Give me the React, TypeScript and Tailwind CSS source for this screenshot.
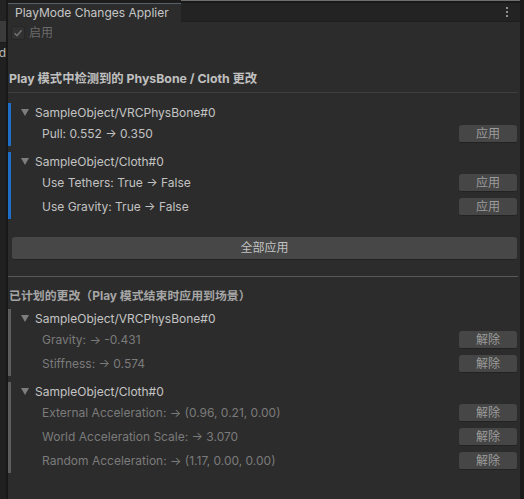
import React from "react";

type Row = { label: string; action: string };
type Group = { name: string; rows: Row[]; accent: "live" | "queued" };

const detected: Group[] = [
  {
    name: "SampleObject/VRCPhysBone#0",
    accent: "live",
    rows: [{ label: "Pull: 0.552 → 0.350", action: "应用" }],
  },
  {
    name: "SampleObject/Cloth#0",
    accent: "live",
    rows: [
      { label: "Use Tethers: True → False", action: "应用" },
      { label: "Use Gravity: True → False", action: "应用" },
    ],
  },
];

const scheduled: Group[] = [
  {
    name: "SampleObject/VRCPhysBone#0",
    accent: "queued",
    rows: [
      { label: "Gravity: → -0.431", action: "解除" },
      { label: "Stiffness: → 0.574", action: "解除" },
    ],
  },
  {
    name: "SampleObject/Cloth#0",
    accent: "queued",
    rows: [
      { label: "External Acceleration: → (0.96, 0.21, 0.00)", action: "解除" },
      { label: "World Acceleration Scale: → 3.070", action: "解除" },
      { label: "Random Acceleration: → (1.17, 0.00, 0.00)", action: "解除" },
    ],
  },
];

function Foldout() {
  return (
    <svg width="8" height="7" viewBox="0 0 8 7" className="shrink-0">
      <polygon points="0,0 8,0 4,7" fill="#7d7d7d" />
    </svg>
  );
}

function SmallButton({ children }: { children: React.ReactNode }) {
  return (
    <button className="flex h-[18px] w-[58px] shrink-0 items-center justify-center rounded-[3px] border-b border-[#222222] bg-[#464646] text-[12px] leading-none text-[#9c9c9c]">
      {children}
    </button>
  );
}

function ChangeGroup({ group, className = "" }: { group: Group; className?: string }) {
  const live = group.accent === "live";
  return (
    <div className={`flex ${className}`}>
      <div className={`w-[3px] shrink-0 ${live ? "bg-[#1e6dc6]" : "bg-[#5d5d5d]"}`} />
      <div className="flex flex-1 flex-col">
        <div className="flex h-[19px] items-center gap-[6px] pl-[10px] text-[12px] text-[#c4c4c4]">
          <Foldout />
          <span className="whitespace-nowrap">{group.name}</span>
        </div>
        {group.rows.map((r) => (
          <div key={r.label} className="flex h-[24px] items-center justify-between pl-[31px] pr-[3px]">
            <span className={`whitespace-nowrap text-[12px] ${live ? "text-[#c2c2c2]" : "text-[#7b7b7b]"}`}>{r.label}</span>
            <SmallButton>{r.action}</SmallButton>
          </div>
        ))}
      </div>
    </div>
  );
}

export default function App() {
  return (
    <div className="flex h-[499px] w-[524px] overflow-hidden bg-[#1b1b1b] font-['Inter','Noto_Sans_CJK_SC',sans-serif]">
      {/* sliver of the neighbouring window */}
      <div className="flex w-[6px] shrink-0 flex-col">
        <div className="h-[21px] bg-[#232323]" />
        <div className="h-[22px] border-b border-[#1a1a1a] bg-[#3b3b3b]" />
        <div className="flex flex-1 justify-end bg-[#202020] pt-[2px]">
          <span className="text-[12px] leading-[16px] text-[#b8b8b8]">d</span>
        </div>
      </div>
      <div className="w-[2px] shrink-0 bg-[#181818]" />

      {/* editor window */}
      <div className="flex w-[512px] shrink-0 flex-col bg-[#2c2c2c]">
        <div className="flex h-[22px] shrink-0 items-end bg-[#1c1c1c]">
          <div className="flex h-[19px] w-[173px] items-center whitespace-nowrap border-t border-[#56616b] bg-[#2c2c2c] pl-[7px] text-[12px] text-[#c6c6c6]">
            PlayMode Changes Applier
          </div>
          <div className="flex h-[22px] flex-1 flex-col">
            <div className="h-px bg-[#6e6e6e]" />
            <div className="h-[2px] bg-[#191919]" />
            <div className="flex flex-1 items-center justify-end border-b border-[#1d1d1d] bg-[#232323] pr-[12px]">
              <div className="flex flex-col gap-[2px]">
                <div className="h-[2px] w-[2px] bg-[#8f8f8f]" />
                <div className="h-[2px] w-[2px] bg-[#8f8f8f]" />
                <div className="h-[2px] w-[2px] bg-[#8f8f8f]" />
              </div>
            </div>
          </div>
        </div>

        <div className="flex flex-col pt-[1px]">
          <div className="mt-[2px] flex h-[16px] items-center gap-[4px] pl-[3px]">
            <div className="flex h-[14px] w-[14px] items-center justify-center rounded-[2px] border border-[#262626] bg-[#313131]">
              <svg width="10" height="10" viewBox="0 0 10 10">
                <path d="M1.5 5.2 L4 7.6 L8.6 2.2" fill="none" stroke="#707070" strokeWidth="1.5" />
              </svg>
            </div>
            <span className="text-[12px] text-[#6a6a6a]">启用</span>
          </div>

          <div className="mt-[29px] flex h-[18px] items-center whitespace-nowrap pl-[1px] text-[12.3px] font-bold text-[#c0c0c0]">
            Play 模式中检测到的 PhysBone / Cloth 更改
          </div>
          <div className="mr-[2px] mt-[4px] h-px bg-[#3e3e3e]" />

          <ChangeGroup group={detected[0]} className="mt-[10px]" />
          <ChangeGroup group={detected[1]} className="mt-[6px]" />

          <button className="ml-[4px] mr-[3px] mt-[18px] flex h-[23px] items-center justify-center rounded-[3px] border-b border-[#222222] bg-[#474747] text-[12px] text-[#c2c2c2]">
            全部应用
          </button>

          <div className="mr-[2px] mt-[16px] h-px bg-[#585858]" />

          <div className="mt-[10px] flex h-[18px] items-center whitespace-nowrap pl-[1px] text-[11.9px] font-bold text-[#a6a6a6]">
            已计划的更改（Play 模式结束时应用到场景）
          </div>

          <ChangeGroup group={scheduled[0]} className="mt-[4px]" />
          <ChangeGroup group={scheduled[1]} className="mt-[6px]" />
        </div>
      </div>

      <div className="w-[4px] shrink-0 bg-[#1a1a1a]" />
    </div>
  );
}
